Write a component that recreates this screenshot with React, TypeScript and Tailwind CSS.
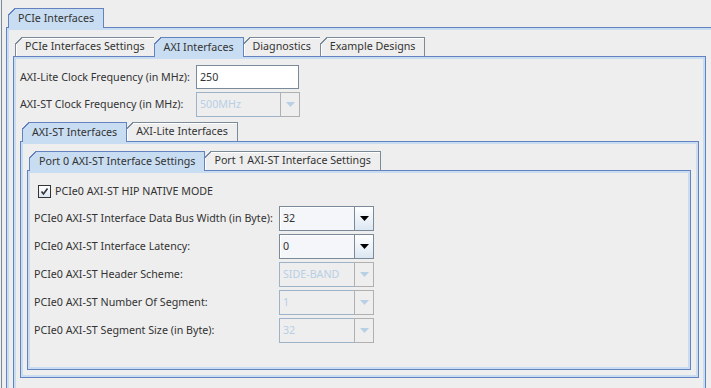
import React from 'react';

type TabProps = { label: string; selected?: boolean; first?: boolean };

function Tab({ label, selected, first }: TabProps) {
  return (
    <div
      className={`relative flex items-center px-[9px] whitespace-nowrap border-t border-l border-r ${first ? '' : '-ml-px'} ${
        selected
          ? 'z-10 h-[20px] -mb-px bg-[#c8ddf2] border-[#6382bf]'
          : 'h-[19px] bg-[#eeeeee] border-[#7a8a99] shadow-[inset_1px_1px_0_#ffffff]'
      }`}
    >
      <span
        className={`absolute -top-px -left-px w-[7px] h-[7px] ${
          selected
            ? 'bg-[linear-gradient(135deg,#eeeeee_45%,#6382bf_45%,#6382bf_62%,transparent_62%)]'
            : 'bg-[linear-gradient(135deg,#eeeeee_45%,#7a8a99_45%,#7a8a99_62%,transparent_62%)]'
        }`}
      />
      <span className="relative pb-px">{label}</span>
    </div>
  );
}

type PaneProps = {
  tabs: string[];
  selected: number;
  className?: string;
  bodyClass?: string;
  children?: React.ReactNode;
};

function Pane({ tabs, selected, className = '', bodyClass = '', children }: PaneProps) {
  return (
    <div className={`flex flex-col ${className}`}>
      <div className="flex items-end pl-[2px]">
        {tabs.map((t, i) => (
          <Tab key={t} label={t} selected={i === selected} first={i === 0} />
        ))}
      </div>
      <div className="flex-1 flex flex-col border border-[#6382bf]">
        <div className={`flex-1 flex flex-col border-2 border-[#c8ddf2] ${bodyClass}`}>{children}</div>
      </div>
    </div>
  );
}

function Arrow({ enabled }: { enabled: boolean }) {
  return (
    <svg width="9" height="5" viewBox="0 0 9 5">
      <polygon points="0,0 9,0 4.5,5" fill={enabled ? '#000000' : '#b8cfe5'} />
    </svg>
  );
}

function Combo({ value, enabled, width }: { value: string; enabled: boolean; width: string }) {
  return (
    <div className={`flex h-[25px] ${width}`}>
      <div
        className={`flex-1 flex items-center pl-[3px] border ${
          enabled
            ? 'border-[#7a8a99] bg-[#f4f6f9] text-[#333333] shadow-[inset_1px_1px_0_#ffffff]'
            : 'border-[#9fb3c8] bg-[#eeeeee] text-[#b8cfe5]'
        }`}
      >
        {value}
      </div>
      <div
        className={`w-[20px] -ml-px flex items-center justify-center border ${
          enabled
            ? 'border-[#7a8a99] bg-[linear-gradient(180deg,#ffffff,#dce7f2)]'
            : 'border-[#b0b0b0] bg-[#eeeeee]'
        }`}
      >
        <Arrow enabled={enabled} />
      </div>
    </div>
  );
}

const portRows: { label: string; value: string; enabled: boolean }[] = [
  { label: 'PCIe0 AXI-ST Interface Data Bus Width (in Byte):', value: '32', enabled: true },
  { label: 'PCIe0 AXI-ST Interface Latency:', value: '0', enabled: true },
  { label: 'PCIe0 AXI-ST Header Scheme:', value: 'SIDE-BAND', enabled: false },
  { label: 'PCIe0 AXI-ST Number Of Segment:', value: '1', enabled: false },
  { label: 'PCIe0 AXI-ST Segment Size (in Byte):', value: '32', enabled: false },
];

export default function App() {
  return (
    <div className="w-[711px] h-[388px] overflow-hidden bg-[#eeeeee] text-[#333333] font-['Noto_Sans',sans-serif] text-[10.7px] leading-none pl-[1px]">
      <div className="h-full border-l border-[#7a8a99] pl-[4px] pt-[8px]">
        <Pane tabs={['PCIe Interfaces']} selected={0} className="w-[730px] h-[400px]" bodyClass="pt-[7px] pl-[4px]">
          <Pane
            tabs={['PCIe Interfaces Settings', 'AXI Interfaces', 'Diagnostics', 'Example Designs']}
            selected={1}
            className="w-[693px] flex-1"
            bodyClass="pl-[4px] pt-[6px]"
          >
            <div className="flex items-center h-[24px]">
              <span className="w-[176px]">AXI-Lite Clock Frequency (in MHz):</span>
              <div className="w-[103px] h-[24px] flex items-center pl-[3px] bg-white border border-[#7a8a99]">250</div>
            </div>
            <div className="flex items-center mt-[3px]">
              <span className="w-[176px]">AXI-ST Clock Frequency (in MHz):</span>
              <Combo value="500MHz" enabled={false} width="w-[104px]" />
            </div>
            <Pane
              tabs={['AXI-ST Interfaces', 'AXI-Lite Interfaces']}
              selected={0}
              className="mt-[5px] w-[679px] h-[256px]"
              bodyClass="pl-[4px] pr-[5px] pt-[7px] pb-[5px]"
            >
              <Pane
                tabs={['Port 0 AXI-ST Interface Settings', 'Port 1 AXI-ST Interface Settings']}
                selected={0}
                className="flex-1"
                bodyClass="pl-[4px] pt-[8px]"
              >
                <div className="flex items-center h-[21px] pl-[4px] gap-[4px]">
                  <div className="w-[13px] h-[13px] border border-[#333333] bg-[linear-gradient(180deg,#ffffff,#dce7f2)] flex items-center justify-center">
                    <svg width="9" height="9" viewBox="0 0 9 9">
                      <path d="M1.5 4.5 L3.5 7 L7.5 1.5" stroke="#333333" strokeWidth="1.6" fill="none" />
                    </svg>
                  </div>
                  <span>PCIe0 AXI-ST HIP NATIVE MODE</span>
                </div>
                <div className="flex flex-col gap-[3px] mt-[4px]">
                  {portRows.map((r) => (
                    <div key={r.label} className="flex items-center">
                      <span className="w-[245px]">{r.label}</span>
                      <Combo value={r.value} enabled={r.enabled} width="w-[95px]" />
                    </div>
                  ))}
                </div>
              </Pane>
            </Pane>
          </Pane>
        </Pane>
      </div>
    </div>
  );
}
